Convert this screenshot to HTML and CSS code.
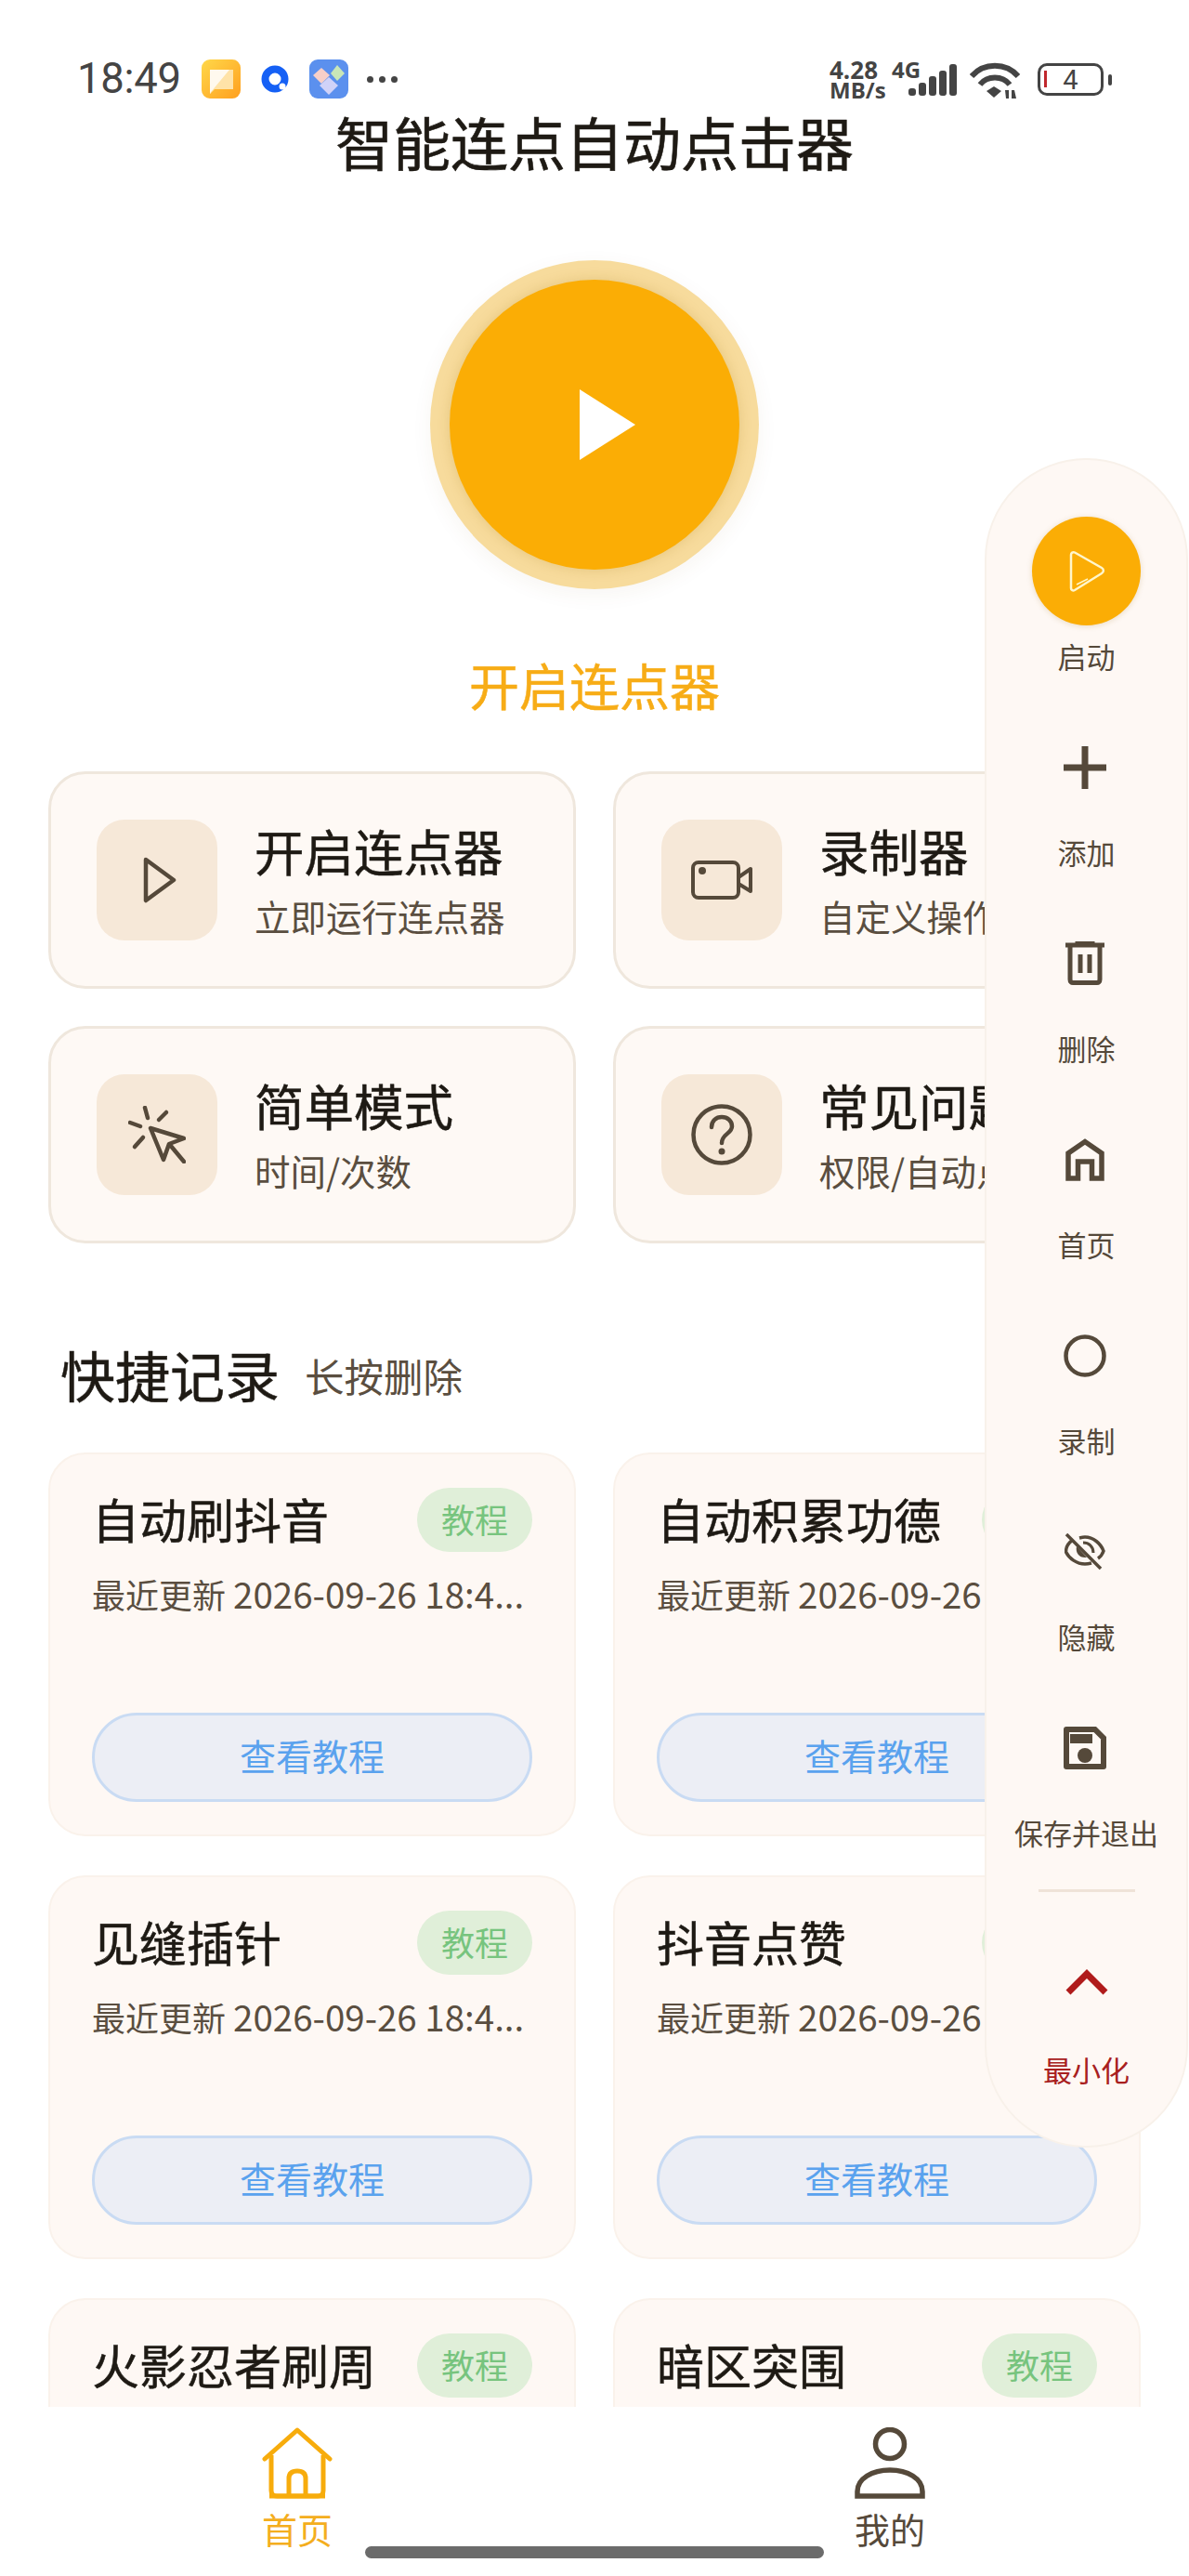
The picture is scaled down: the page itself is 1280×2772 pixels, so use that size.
FILE: index.html
```html
<!DOCTYPE html>
<html lang="zh-CN">
<head>
<meta charset="UTF-8" />
<meta name="viewport" content="width=device-width, initial-scale=1" />
<title>智能连点自动点击器</title>
<link rel="stylesheet" href="styles.css">
</head>
<body>

<div class="screen">
  <div class="main">
    <div class="status-bar">
      <div class="status-left">
        <span class="time">18:49</span>
        <svg class="app-icon" viewBox="0 0 42 42">
          <defs>
            <linearGradient id="noteBg" x1="0" y1="0" x2="1" y2="1"><stop offset="0" stop-color="#FFD84A"/><stop offset="1" stop-color="#FF9F1E"/></linearGradient>
          </defs>
          <rect width="42" height="42" rx="9" fill="url(#noteBg)"/>
          <path d="M9 11H34V32H14L9 37Z" fill="#FFE3A8"/>
          <path d="M9 11H30L10 35L9 37Z" fill="#FFF9EE"/>
        </svg>
        <svg class="app-icon" viewBox="0 0 42 42">
          <circle cx="21" cy="21" r="10.5" fill="none" stroke="#1560F5" stroke-width="8"/>
          <circle cx="29" cy="29" r="3.5" fill="#fff"/>
        </svg>
        <svg class="app-icon" viewBox="0 0 42 42">
          <rect width="42" height="42" rx="9" fill="#5B90EE"/>
          <path d="M13 9L22 17L13 26L4 17Z" fill="#F7CFC8"/>
          <path d="M30 6L38 15L30 23L23 15Z" fill="#C8E6B8"/>
          <path d="M21 19L31 28L21 38L11 28Z" fill="#D0D2F8"/>
        </svg>
        <span class="dots"><i></i><i></i><i></i></span>
      </div>
      <div class="status-right">
        <div class="speed"><span class="speed-num">4.28</span><span>MB/s</span></div>
        <div class="net">
          <span class="net-label">4G</span>
          <svg class="signal" viewBox="0 0 52 34">
            <rect x="0" y="26" width="8" height="8" rx="3" fill="#444"/>
            <rect x="11" y="20" width="8" height="14" rx="3" fill="#444"/>
            <rect x="22" y="13" width="8" height="21" rx="3" fill="#444"/>
            <rect x="33" y="7" width="8" height="27" rx="3" fill="#444"/>
            <rect x="44" y="0" width="8" height="34" rx="3" fill="#444"/>
          </svg>
        </div>
        <svg class="wifi" viewBox="0 0 56 40">
          <g fill="none" stroke="#444" stroke-width="6">
            <path d="M2 15C15 0 39 0 52 15"/>
            <path d="M11 24C19 14 35 14 43 24"/>
          </g>
          <path d="M18 31L26 26L34 31L26 38Z" fill="#444"/>
          <path d="M38 30H42V39H39ZM45 30H48L50 39H45Z" fill="#444"/>
        </svg>
        <div class="battery"><i class="battery-low"></i><span>4</span></div>
        <i class="battery-nub"></i>
      </div>
    </div>

    <h1 class="app-title">智能连点自动点击器</h1>

    <div class="hero">
      <div class="start-ring">
        <div class="start-btn">
          <svg class="start-arrow" viewBox="0 0 60 76"><path d="M0 0L60 38L0 76Z" fill="#fff"/></svg>
        </div>
      </div>
      <div class="start-label">开启连点器</div>
    </div>

    <div class="action-grid">
      <div class="action-card">
        <div class="action-icon">
          <svg class="play-outline" width="36" height="50" viewBox="0 0 36 50"><path d="M3 3L33 25L3 47Z" fill="none" stroke="#55493A" stroke-width="4.5" stroke-linejoin="round"/></svg>
        </div>
        <div class="action-text">
          <div class="action-title">开启连点器</div>
          <div class="action-sub">立即运行连点器</div>
        </div>
      </div>
      <div class="action-card">
        <div class="action-icon">
          <svg width="66" height="42" viewBox="0 0 66 42">
            <rect x="2" y="2" width="49" height="38" rx="6" fill="none" stroke="#55493A" stroke-width="4"/>
            <path d="M51 18L64 9V33L51 25" fill="none" stroke="#55493A" stroke-width="4" stroke-linejoin="round"/>
            <circle cx="12" cy="11" r="4" fill="#55493A"/>
          </svg>
        </div>
        <div class="action-text">
          <div class="action-title">录制器</div>
          <div class="action-sub">自定义操作流程</div>
        </div>
      </div>
      <div class="action-card">
        <div class="action-icon">
          <svg width="62" height="62" viewBox="0 0 62 62">
            <g fill="none" stroke="#55493A" stroke-width="4.5" stroke-linecap="round" stroke-linejoin="round">
              <path d="M24 24L38 58L44 41L60 35Z"/>
              <path d="M45 42L60 60"/>
              <path d="M18 2L21 13"/>
              <path d="M41 7L33 15"/>
              <path d="M2 18L13 22"/>
              <path d="M7 44L16 34"/>
            </g>
          </svg>
        </div>
        <div class="action-text">
          <div class="action-title">简单模式</div>
          <div class="action-sub">时间/次数</div>
        </div>
      </div>
      <div class="action-card">
        <div class="action-icon">
          <svg width="66" height="66" viewBox="0 0 66 66">
            <circle cx="33" cy="33" r="30.5" fill="none" stroke="#55493A" stroke-width="4.5"/>
            <path d="M22 25C22 18 27 14 33 14C39 14 44 18 44 24C44 32 33 32 33 42" fill="none" stroke="#55493A" stroke-width="4.5" stroke-linecap="round"/>
            <circle cx="33" cy="51" r="3.5" fill="#55493A"/>
          </svg>
        </div>
        <div class="action-text">
          <div class="action-title">常见问题</div>
          <div class="action-sub">权限/自动点击</div>
        </div>
      </div>
    </div>

    <div class="section-head">
      <h2 class="section-title">快捷记录</h2>
      <span class="section-sub">长按删除</span>
    </div>

    <div class="record-grid">
      <div class="record-card">
        <div class="record-top"><span class="record-name">自动刷抖音</span><span class="badge">教程</span></div>
        <div class="record-meta">最近更新 <span class="record-date">2026-09-26 18:4...</span></div>
        <div class="record-btn">查看教程</div>
      </div>
      <div class="record-card">
        <div class="record-top"><span class="record-name">自动积累功德</span><span class="badge">教程</span></div>
        <div class="record-meta">最近更新 <span class="record-date">2026-09-26 18:4...</span></div>
        <div class="record-btn">查看教程</div>
      </div>
      <div class="record-card">
        <div class="record-top"><span class="record-name">见缝插针</span><span class="badge">教程</span></div>
        <div class="record-meta">最近更新 <span class="record-date">2026-09-26 18:4...</span></div>
        <div class="record-btn">查看教程</div>
      </div>
      <div class="record-card">
        <div class="record-top"><span class="record-name">抖音点赞</span><span class="badge">教程</span></div>
        <div class="record-meta">最近更新 <span class="record-date">2026-09-26 18:4...</span></div>
        <div class="record-btn">查看教程</div>
      </div>
      <div class="record-card">
        <div class="record-top"><span class="record-name">火影忍者刷周</span><span class="badge">教程</span></div>
        <div class="record-meta">最近更新 <span class="record-date">2026-09-26 18:4...</span></div>
        <div class="record-btn">查看教程</div>
      </div>
      <div class="record-card">
        <div class="record-top"><span class="record-name">暗区突围</span><span class="badge">教程</span></div>
        <div class="record-meta">最近更新 <span class="record-date">2026-09-26 18:4...</span></div>
        <div class="record-btn">查看教程</div>
      </div>
    </div>
  </div>

  <div class="bottom-nav">
    <div class="nav-item nav-active">
      <svg width="76" height="77" viewBox="0 0 76 77">
        <path d="M3 34L38 3L73 34" fill="none" stroke="#F7AC0C" stroke-width="5" stroke-linecap="round" stroke-linejoin="round"/>
        <path d="M10 30V68C10 72 12 74 16 74H60C64 74 66 72 66 68V30" fill="none" stroke="#F7AC0C" stroke-width="5"/>
        <path d="M29 74V55C29 49 33 47 38 47C43 47 47 49 47 55V74" fill="none" stroke="#F7AC0C" stroke-width="5"/>
        <path d="M8 74H68" stroke="#F7AC0C" stroke-width="5"/>
      </svg>
      <span>首页</span>
    </div>
    <div class="nav-item nav-me">
      <svg width="76" height="77" viewBox="0 0 76 77">
        <circle cx="38" cy="18" r="15.5" fill="none" stroke="#55493A" stroke-width="5.5"/>
        <path d="M3 74V69C3 55 19 46 38 46C57 46 73 55 73 69V74Z" fill="none" stroke="#55493A" stroke-width="5.5"/>
      </svg>
      <span>我的</span>
    </div>
  </div>

  <div class="float-panel">
    <div class="panel-item">
      <div class="panel-icon">
        <div class="panel-start">
          <svg width="40" height="46" viewBox="0 0 40 46">
            <path d="M3 5C3 3 5 1.5 7 2.5L36 19C38.5 20.5 38.5 23.5 36 25L7 43C5 44 3 43 3 41Z" fill="none" stroke="#FFF6CC" stroke-width="2.5"/>
            <path d="M9 37L21 31" stroke="#FFF6CC" stroke-width="1.5"/>
          </svg>
        </div>
      </div>
      <span>启动</span>
    </div>
    <div class="panel-item">
      <div class="panel-icon">
        <svg width="46" height="46" viewBox="0 0 46 46"><path d="M0 23H46M23 0V46" stroke="#55493A" stroke-width="7"/></svg>
      </div>
      <span>添加</span>
    </div>
    <div class="panel-item">
      <div class="panel-icon">
        <svg width="42" height="47" viewBox="0 0 42 47">
          <path d="M0 4H42" stroke="#55493A" stroke-width="5"/>
          <path d="M12 3V1H30V3" fill="none" stroke="#55493A" stroke-width="3"/>
          <path d="M5 5V41C5 43.5 6.5 44.5 8 44.5H34C35.5 44.5 37 43.5 37 41V5" fill="none" stroke="#55493A" stroke-width="5"/>
          <path d="M16 14V34M26 14V34" stroke="#55493A" stroke-width="5"/>
        </svg>
      </div>
      <span>删除</span>
    </div>
    <div class="panel-item">
      <div class="panel-icon">
        <svg width="42" height="46" viewBox="0 0 42 46">
          <path d="M3 43V16L21 3.5L39 16V43H28.5V25H13.5V43Z" fill="none" stroke="#55493A" stroke-width="5.5"/>
        </svg>
      </div>
      <span>首页</span>
    </div>
    <div class="panel-item">
      <div class="panel-icon">
        <svg width="46" height="46" viewBox="0 0 46 46"><circle cx="23" cy="23" r="20.5" fill="none" stroke="#55493A" stroke-width="4.5"/></svg>
      </div>
      <span>录制</span>
    </div>
    <div class="panel-item">
      <div class="panel-icon">
        <svg width="44" height="40" viewBox="0 0 44 40">
          <path d="M9 7C3 11 1.5 17 1.5 20C5 27 13 33 22 33C25 33 27 32.5 29 32M16 5C18 4.5 20 4 22 4C31 4 39 11 42 19C41 22 39 25 36 27" fill="none" stroke="#55493A" stroke-width="3.5"/>
          <path d="M13 14C11.5 21 16 27 24 26Z" fill="#55493A"/>
          <path d="M20 10C26 10 31 14 31 21" fill="none" stroke="#55493A" stroke-width="3"/>
          <path d="M2 1L39 38" stroke="#55493A" stroke-width="3.5"/>
        </svg>
      </div>
      <span>隐藏</span>
    </div>
    <div class="panel-item">
      <div class="panel-icon">
        <svg width="46" height="46" viewBox="0 0 46 46">
          <path d="M3 0H35L46 11V43C46 45 45 46 43 46H3C1 46 0 45 0 43V3C0 1 1 0 3 0Z" fill="#55493A"/>
          <path d="M6 6V40H40V13.5L32.5 6Z" fill="#FEF8F4"/>
          <rect x="7" y="8" width="24" height="10" fill="#55493A"/>
          <circle cx="23" cy="31" r="8" fill="#55493A"/>
        </svg>
      </div>
      <span>保存并退出</span>
    </div>
    <div class="panel-line"></div>
    <div class="panel-item panel-min">
      <div class="panel-icon">
        <svg class="chevron" width="46" height="28" viewBox="0 0 46 28"><path d="M3 25L23 5L43 25" fill="none" stroke="#B01B1B" stroke-width="7"/></svg>
      </div>
      <span>最小化</span>
    </div>
  </div>

  <div class="home-bar"></div>
</div>

</body>
</html>
```

FILE: styles.css
```css
* { box-sizing: border-box; }
html, body { margin: 0; padding: 0; background: #fff; }
body { font-family: "Noto Sans CJK SC", "Noto Sans", sans-serif; color: #1E1A14; }
h1, h2 { margin: 0; font-weight: 400; }

.screen {
  position: relative;
  width: 1280px;
  height: 2772px;
  display: flex;
  flex-direction: column;
  overflow: hidden;
  background: #fff;
}
.main { flex: 1; min-height: 0; overflow: hidden; padding: 0 52px; }

/* status bar */
.status-bar {
  height: 115px;
  padding: 64px 31px 0 31px;
  display: flex;
  justify-content: space-between;
  align-items: flex-start;
  color: #444;
}
.status-left { display: flex; align-items: center; height: 42px; }
.time { font-family: Roboto, sans-serif; font-size: 45.5px; line-height: 42px; width: 134px; letter-spacing: -0.3px; }
.app-icon { width: 42px; height: 42px; margin-right: 16px; }
.dots { display: flex; gap: 6px; margin-left: 4px; }
.dots i { width: 7px; height: 7px; border-radius: 50%; background: #444; }

.status-right { display: flex; align-items: flex-start; }
.speed {
  display: flex;
  flex-direction: column;
  font-family: "Open Sans", sans-serif;
  font-weight: 700;
  font-size: 24px;
  line-height: 22px;
  width: 67px;
}
.speed-num { font-size: 26px; }
.net { position: relative; width: 84px; height: 40px; }
.net-label { display: block; font-family: "Open Sans", sans-serif; font-weight: 700; font-size: 24px; line-height: 22px; }
.signal { position: absolute; left: 18px; top: 5px; width: 52px; height: 34px; }
.wifi { width: 56px; height: 40px; margin: 3px 17px 0 0; }
.battery {
  position: relative;
  width: 71px;
  height: 35px;
  margin-top: 4px;
  border: 3.5px solid #444;
  border-radius: 10px;
  display: flex;
  align-items: center;
  justify-content: center;
}
.battery span { font-family: Roboto, sans-serif; font-size: 29px; line-height: 28px; }
.battery-low { position: absolute; left: 4px; top: 5px; width: 2.5px; height: 18px; background: #C0282D; }
.battery-nub { width: 4px; height: 12px; margin: 16px 0 0 5px; border-radius: 2px; background: #444; }

/* title + start */
.app-title { font-size: 62px; line-height: 74px; text-align: center; -webkit-text-stroke: 0.6px #1E1A14; }
.hero { display: flex; flex-direction: column; align-items: center; margin-top: 91px; }
.start-ring {
  width: 354px;
  height: 354px;
  padding: 21px;
  border-radius: 50%;
  background: #F7DB9C;
  box-shadow: 0 6px 22px rgba(120, 90, 30, 0.06);
}
.start-btn {
  width: 312px;
  height: 312px;
  border-radius: 50%;
  background: #FBAD05;
  box-shadow: 0 0 14px rgba(170, 120, 20, 0.22);
  display: flex;
  align-items: center;
  justify-content: center;
}
.start-arrow { width: 60px; height: 76px; margin-left: 28px; }
.start-label { margin-top: 68px; font-size: 54px; line-height: 70px; color: #F7AC16; -webkit-text-stroke: 0.5px #F7AC16; }

/* action cards */
.action-grid { display: grid; grid-template-columns: 568px 568px; gap: 40px; margin-top: 58px; }
.action-card {
  height: 234px;
  padding: 0 0 0 49px;
  background: #FEF9F5;
  border: 3px solid #EFE7DD;
  border-radius: 40px;
  display: flex;
  align-items: center;
  gap: 40px;
  overflow: hidden;
}
.action-icon {
  width: 130px;
  height: 130px;
  flex: none;
  border-radius: 30px;
  background: #F6E8D8;
  display: flex;
  align-items: center;
  justify-content: center;
}
.play-outline { margin-left: 6px; }
.action-text { margin-bottom: 5px; }
.action-title { font-size: 53.5px; line-height: 70px; white-space: nowrap; -webkit-text-stroke: 0.5px #1E1A14; }
.action-sub { font-size: 38.5px; line-height: 50px; margin-top: 10px; color: #5A4E40; white-space: nowrap; }

/* quick records */
.section-head { display: flex; align-items: center; gap: 27px; height: 80px; margin: 101px 0 44px 13px; }
.section-title { font-size: 59px; line-height: 80px; -webkit-text-stroke: 0.5px #1E1A14; }
.section-sub { font-size: 42.5px; color: #5A4E40; }

.record-grid { display: grid; grid-template-columns: 568px 568px; gap: 42px 40px; }
.record-card {
  height: 413px;
  padding: 36px 45px 35px;
  background: #FEF8F4;
  border: 2px solid #FAF2EB;
  border-radius: 40px;
  display: flex;
  flex-direction: column;
}
.record-top { display: flex; align-items: center; justify-content: space-between; height: 69px; }
.record-name { font-size: 51px; line-height: 64px; margin-bottom: 4px; white-space: nowrap; -webkit-text-stroke: 0.5px #1E1A14; }
.badge {
  width: 124px;
  height: 69px;
  flex: none;
  border-radius: 35px;
  background: #E0EFD9;
  color: #77C47E;
  font-size: 36px;
  line-height: 67px;
  text-align: center;
}
.record-meta {
  margin-top: 19px;
  font-size: 36px;
  line-height: 50px;
  color: #5A4E40;
  white-space: nowrap;
}
.record-date { font-size: 38.5px; }
.record-btn {
  margin-top: auto;
  height: 96px;
  border: 3px solid #C9DBF3;
  border-radius: 48px;
  background: #ECEEF5;
  color: #5AA2EE;
  font-size: 39px;
  line-height: 85px;
  text-align: center;
}

/* bottom nav */
.bottom-nav { height: 182px; flex: none; padding-top: 22px; display: flex; background: #fff; }
.nav-item {
  width: 50%;
  display: flex;
  flex-direction: column;
  align-items: center;
  color: #55493A;
  font-size: 38px;
  line-height: 50px;
}
.nav-item span { margin-top: 7px; }
.nav-active { color: #F4AE1E; }
.nav-me { padding-right: 4px; }
.home-bar {
  position: absolute;
  left: 393px;
  top: 2740px;
  width: 494px;
  height: 13px;
  border-radius: 7px;
  background: #6B6B6B;
}

/* floating panel */
.float-panel {
  position: absolute;
  left: 1060px;
  top: 493px;
  width: 219px;
  height: 1818px;
  padding: 61px 0;
  background: #FEF8F4;
  border: 2px solid #F8F1EA;
  border-radius: 109px;
  display: flex;
  flex-direction: column;
  align-items: center;
  gap: 41px;
}
.panel-item {
  width: 100%;
  display: flex;
  flex-direction: column;
  align-items: center;
  color: #55493A;
  font-size: 31px;
  line-height: 40px;
  white-space: nowrap;
}
.panel-item span { margin-top: 13px; }
.panel-icon { height: 117px; display: flex; align-items: center; justify-content: center; }
.panel-icon > svg { margin-right: 3px; }
.panel-icon > .chevron { margin-right: 0; margin-bottom: 6px; }
.panel-start {
  width: 117px;
  height: 117px;
  border-radius: 50%;
  background: #FBAD05;
  box-shadow: 0 1px 6px rgba(150, 110, 20, 0.2);
  display: flex;
  align-items: center;
  justify-content: center;
}
.panel-line { width: 104px; height: 3px; flex: none; background: #EFE3D8; }
.panel-min { color: #A82020; }
```
